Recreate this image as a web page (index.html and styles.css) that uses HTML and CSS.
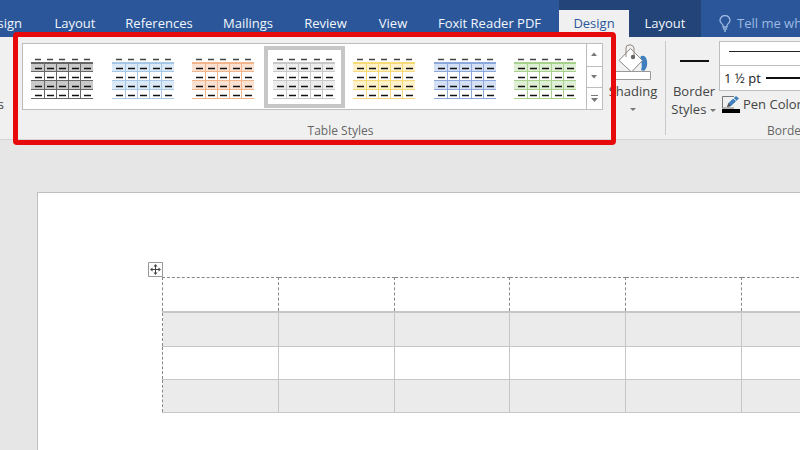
FILE: index.html
```
<!DOCTYPE html>
<html lang="en">
<head>
<meta charset="utf-8">
<title>Table Design</title>
<link rel="stylesheet" href="styles.css">
</head>
<body>
<svg class="defs" aria-hidden="true">
  <symbol id="grid" viewBox="0 0 62 42">
    <path class="band" d="M0 5h62v9H0zM0 23h62v9H0z"/>
    <path class="rule" d="M0 13.500h62M0 22.500h62M0 31.500h62M0 40.500h62M13.500 5v35M25.500 5v35M37.500 5v35M49.500 5v35"/>
    <path class="rule head" d="M0 5h62"/>
    <path class="dash soft" d="M4 1.500h6M16 1.500h6M28 1.500h6M41 1.500h6M53 1.500h6"/>
    <path class="dash" d="M4 10.500h7M16 10.500h7M28 10.500h7M41 10.500h7M53 10.500h7M4 19.500h7M16 19.500h7M28 19.500h7M41 19.500h7M53 19.500h7M4 28.500h7M16 28.500h7M28 28.500h7M41 28.500h7M53 28.500h7M4 37.500h7M16 37.500h7M28 37.500h7M41 37.500h7M53 37.500h7"/>
  </symbol>
</svg>

<header class="tabs">
  <nav class="main-tabs">
    <a href="#" class="first">sign</a>
    <a href="#">Layout</a>
    <a href="#">References</a>
    <a href="#">Mailings</a>
    <a href="#">Review</a>
    <a href="#">View</a>
    <a href="#">Foxit Reader PDF</a>
  </nav>
  <nav class="tool-tabs">
    <a href="#" class="active">Design</a>
    <a href="#">Layout</a>
  </nav>
  <button class="tell">
    <svg width="12" height="17" viewBox="0 0 12 17"><path d="M4 12V10.500C4 9 1 8 1 5.500a5 5 0 0 1 10 0C11 8 8 9 8 10.500V12zM4 14h4M5 16h2" fill="none" stroke="#9db9e2" stroke-width="1.300"/></svg>
    Tell me what
  </button>
</header>

<section class="ribbon">
  <div class="edge">s</div>
  <div class="styles-group">
    <div class="gallery">
      <button class="style black" aria-label="Black"><svg><use href="#grid"/></svg></button>
      <button class="style blue" aria-label="Blue"><svg><use href="#grid"/></svg></button>
      <button class="style orange" aria-label="Orange"><svg><use href="#grid"/></svg></button>
      <button class="style gray selected" aria-label="Gray"><svg><use href="#grid"/></svg></button>
      <button class="style gold" aria-label="Gold"><svg><use href="#grid"/></svg></button>
      <button class="style indigo" aria-label="Indigo"><svg><use href="#grid"/></svg></button>
      <button class="style green" aria-label="Green"><svg><use href="#grid"/></svg></button>
      <div class="scroller">
        <button aria-label="Up"><svg width="7" height="9" viewBox="0 0 7 9"><path d="M0 6l3-3.500L6 6z"/></svg></button>
        <button aria-label="Down"><svg width="7" height="9" viewBox="0 0 7 9"><path d="M0 3h6L3 6.500z"/></svg></button>
        <button aria-label="More"><svg width="9" height="9" viewBox="0 0 9 9"><path d="M1 1h7v1H1zM1 4h7L4.500 8z"/></svg></button>
      </div>
    </div>
    <div class="caption">Table Styles</div>
    <div class="highlight"></div>
  </div>

  <button class="shading">
    <svg width="42" height="37" viewBox="0 0 42 37">
      <path d="M29 13q5-1 6 5 1 6-3 10l-3-1q2-6-1-11z" fill="#3f7fbe"/>
      <path d="M18.500 5.500l12 12-11 11.500L7 17.500z" fill="#fff" stroke="#888"/>
      <path d="M14 14V5q0-3 3-3h2q2 0 3 3v8" fill="none" stroke="#91877c"/>
      <circle cx="21" cy="14" r="2.200" fill="#666"/>
      <path d="M2.500 28.500h36v8h-36z" fill="#fff" stroke="#999"/>
    </svg>
    <span>Shading</span>
    <svg class="arrow" width="7" height="5" viewBox="0 0 7 5"><path d="M0 1h6L3 4z"/></svg>
  </button>

  <div class="borders-group">
    <button class="border-styles">
      <span class="line"></span>
      <span>Border</span>
      <span>Styles <svg class="arrow" width="7" height="5" viewBox="0 0 7 5"><path d="M0 1h6L3 4z"/></svg></span>
    </button>
    <div class="pens">
      <button class="box" aria-label="Line style"><span class="thin"></span></button>
      <button class="box"><span>1 ½ pt</span><span class="thick"></span></button>
      <button class="pen">
        <svg width="19" height="18" viewBox="0 0 19 18">
          <path d="M13 1.500H1.500V13H13" fill="none" stroke="#777"/>
          <path d="M6 12l1.500-4L15 1l3 2.500L10 11z" fill="#3f7fbe"/><path d="M6 12l1.500-4L10 11z" fill="#555"/><path d="M12 3l3.500 3" stroke="#fff"/>
          <path d="M1 14h18v4H1z" fill="#000"/>
        </svg>
        Pen Color
      </button>
      <div class="caption">Borders</div>
    </div>
  </div>
</section>

<main>
  <article class="page">
    <div class="table-wrap">
      <svg class="handle" width="15" height="15" viewBox="0 0 15 15">
        <path d="M.5.5h14v14H.5z" fill="#fff" stroke="#999"/>
        <path d="M3 7.500h9M7.500 3v9" stroke="#444"/>
        <path d="M7.500 2l2 2.500h-4zM7.500 13l2-2.500h-4zM2 7.500l2.500-2v4zM13 7.500l-2.500-2v4z" fill="#444"/>
      </svg>
      <table>
        <thead><tr><th></th><th></th><th></th><th></th><th></th><th></th></tr></thead>
        <tbody>
          <tr><td></td><td></td><td></td><td></td><td></td><td></td></tr>
          <tr><td></td><td></td><td></td><td></td><td></td><td></td></tr>
          <tr><td></td><td></td><td></td><td></td><td></td><td></td></tr>
        </tbody>
      </table>
    </div>
  </article>
</main>
</body>
</html>
```
FILE: styles.css
```
* { box-sizing: border-box; }

body {
  margin: 0;
  min-height: 100vh;
  display: flex;
  flex-direction: column;
  overflow: hidden;
  background: #e6e6e6;
  color: #444;
  font: 13px/18px "Open Sans", "Noto Sans", sans-serif;
}

button {
  margin: 0;
  padding: 0;
  border: 0;
  background: none;
  color: inherit;
  font: inherit;
}

.defs { position: absolute; width: 0; height: 0; }

/* Tab strip */
.tabs {
  display: flex;
  align-items: flex-end;
  height: 37px;
  overflow: hidden;
  background: #2b579a;
  white-space: nowrap;
}
.tabs a {
  display: block;
  padding: 4px 0 5px;
  color: #f2f6fc;
  text-align: center;
  text-decoration: none;
}
.main-tabs {
  display: grid;
  flex: none;
  grid-template-columns: 39px 72px 96px 82px 73px 62px 131px;
}
.tabs .first {
  display: flex;
  justify-content: flex-end;
  padding-right: 17px;
}
.tool-tabs {
  display: grid;
  flex: none;
  grid-template-columns: 70px 72px;
  align-self: stretch;
  align-items: end;
  margin-left: 4px;
  background: #234478;
}
.tabs .active { background: #f0f0f0; color: #2b579a; }
.tell {
  display: flex;
  flex: none;
  align-items: center;
  gap: 6px;
  margin-left: 18px;
  padding: 4px 0 5px;
  color: #9db9e2;
}

/* Ribbon */
.ribbon {
  display: flex;
  height: 103px;
  background: #f0f0f0;
  border-bottom: 1px solid #d5d5d5;
  white-space: nowrap;
}
.edge {
  display: flex;
  flex: none;
  justify-content: flex-end;
  width: 14px;
  padding: 58px 10px 0 0;
}
.styles-group {
  position: relative;
  flex: none;
  padding: 6px 12px 0 8px;
}
.gallery {
  display: flex;
  height: 67px;
  background: #fff;
  border: 1px solid #bdbdbd;
}
.style {
  display: grid;
  place-items: center;
  width: 81px;
  margin: 2px 0 1px;
  padding: 4px 2px 0 0;
}
.style:nth-child(odd) { width: 80px; }
.style svg { width: 62px; height: 42px; }
.selected { border: 4px solid #c6c6c6; }
.band { fill: var(--band); }
.rule { fill: none; stroke: var(--rule); }
.head { stroke-width: 2px; }
.dash { stroke: #111; stroke-width: 1.6px; }
.soft { stroke: #444; }
.black { --band: #c9c9c9; --rule: #666; }
.blue { --band: #dceaf7; --rule: #a6c8e6; }
.orange { --band: #fbe1d2; --rule: #f2b48b; }
.gray { --band: #ededed; --rule: #c8c8c8; }
.gold { --band: #fff1c9; --rule: #f8d978; }
.indigo { --band: #d5e0f5; --rule: #8da9db; }
.green { --band: #dfefd5; --rule: #a9d18e; }
.scroller {
  display: grid;
  width: 16px;
  grid-template-rows: 1fr 1fr 1fr;
  border-left: 1px solid #bdbdbd;
}
.scroller button { display: grid; place-items: center; }
.scroller button + button { border-top: 1px solid #bdbdbd; }
.scroller path, .arrow path { fill: #777; }
.caption { color: #666; font-size: 12px; text-align: center; }
.styles-group .caption { padding: 12px 0 0 56px; }
.highlight {
  position: absolute;
  top: -5px;
  right: -1px;
  bottom: -6px;
  left: -1px;
  border: 5px solid #e8090c;
  border-radius: 4px;
}

.shading {
  display: flex;
  flex: none;
  flex-direction: column;
  align-items: center;
  align-self: flex-start;
  width: 48px;
  margin-left: -6px;
  padding-top: 6px;
}
.shading span { padding: 2px 0 7px; }

.borders-group {
  display: flex;
  flex: 1;
  min-width: 0;
  margin: 4px 0 0 8px;
}
.border-styles {
  display: flex;
  flex: none;
  flex-direction: column;
  align-items: center;
  align-self: flex-start;
  width: 54px;
  height: 94px;
  padding-left: 3px;
  border-left: 1px solid #c8c8c8;
}
.line { width: 29px; height: 2px; margin: 19px 0 20px; background: #111; }
.border-styles .arrow { vertical-align: middle; }
.pens { flex: 1; min-width: 0; overflow: hidden; }
.box {
  display: flex;
  align-items: center;
  gap: 5px;
  width: 100%;
  height: 25px;
  padding-left: 4px;
  background: #fff;
  border: 1px solid #bdbdbd;
  border-right: 0;
  color: #222;
}
.box + .box { border-top: 0; }
.thin { flex: 1; height: 1px; margin: 0 0 4px 5px; background: #222; }
.thick { flex: 1; height: 2px; background: #111; }
.pen { display: flex; align-items: center; gap: 3px; padding: 4px 0 0 2px; }
.pens .caption { padding: 9px 0 0 48px; text-align: left; }

/* Document */
main { flex: 1; display: flex; padding: 52px 0 0 37px; overflow: hidden; }
.page {
  flex: 1;
  min-width: 0;
  padding: 84px 0 0 124px;
  background: #fff;
  border: solid #bfbfbf;
  border-width: 1px 0 0 1px;
}
.table-wrap { position: relative; margin-right: -58px; }
.handle { position: absolute; top: -15px; left: -14px; }
table {
  width: 100%;
  table-layout: fixed;
  border-collapse: collapse;
  border-left: 1px dashed #888;
}
th, td { height: 33px; padding: 0; }
th {
  height: 34px;
  border: 1px dashed #888;
  border-bottom: 2px solid #c6c6c6;
}
td { border: solid #c6c6c6; border-width: 1px 0 1px 1px; }
td:first-child { border-left: 1px dashed #888; }
tbody tr:first-child td { height: 35px; border-top: 2px solid #c6c6c6; }
tbody tr:nth-child(odd) { background: #ebebeb; }
```
